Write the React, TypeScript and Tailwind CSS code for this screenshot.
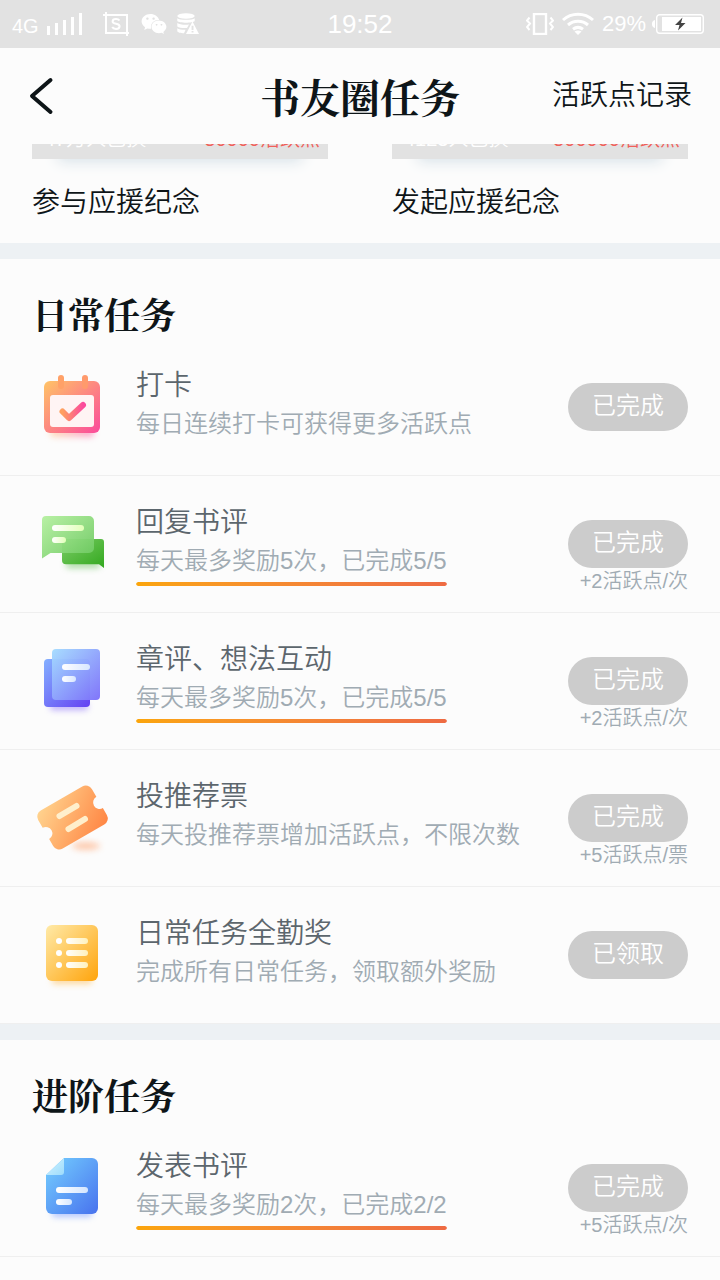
import { useId, type ReactNode } from "react";
import { FaWeixin } from "react-icons/fa";

type IconName = "calendar" | "bubbles" | "pages" | "ticket" | "list" | "doc";

interface Task {
  icon: IconName;
  title: string;
  desc: string;
  action: string;
  reward?: string;
  progress?: number;
}

const dailyTasks: Task[] = [
  { icon: "calendar", title: "打卡", desc: "每日连续打卡可获得更多活跃点", action: "已完成" },
  {
    icon: "bubbles",
    title: "回复书评",
    desc: "每天最多奖励5次，已完成5/5",
    action: "已完成",
    reward: "+2活跃点/次",
    progress: 100,
  },
  {
    icon: "pages",
    title: "章评、想法互动",
    desc: "每天最多奖励5次，已完成5/5",
    action: "已完成",
    reward: "+2活跃点/次",
    progress: 100,
  },
  {
    icon: "ticket",
    title: "投推荐票",
    desc: "每天投推荐票增加活跃点，不限次数",
    action: "已完成",
    reward: "+5活跃点/票",
  },
  { icon: "list", title: "日常任务全勤奖", desc: "完成所有日常任务，领取额外奖励", action: "已领取" },
];

const advancedTasks: Task[] = [
  {
    icon: "doc",
    title: "发表书评",
    desc: "每天最多奖励2次，已完成2/2",
    action: "已完成",
    reward: "+5活跃点/次",
    progress: 100,
  },
];

const keepsakes = [
  { name: "参与应援纪念", claimed: "47万人已换", cost: "50000活跃点" },
  { name: "发起应援纪念", claimed: "4123人已换", cost: "500000活跃点" },
];

const palette: Record<IconName, { from: string; to: string; backFrom: string; backTo: string; line: string }> = {
  calendar: { from: "#ffc466", to: "#fb4a9c", backFrom: "#ffc466", backTo: "#ff8a72", line: "#ffffff" },
  bubbles: { from: "#b5f0a0", to: "#6cc860", backFrom: "#7ccc66", backTo: "#32a81e", line: "#e2ffb8" },
  pages: { from: "#a4dcff", to: "#7c70fa", backFrom: "#84b0ff", backTo: "#6440f2", line: "#d8e6ff" },
  ticket: { from: "#ffd590", to: "#ff8442", backFrom: "#ffd590", backTo: "#ff8442", line: "#ffefcc" },
  list: { from: "#ffeaa8", to: "#ffa40c", backFrom: "#ffeaa8", backTo: "#ffa40c", line: "#fff1bc" },
  doc: { from: "#74d0ff", to: "#4872ee", backFrom: "#d4f4ff", backTo: "#9ddcfc", line: "#d4e6ff" },
};

function TaskIcon({ name }: { name: IconName }) {
  const id = useId();
  const c = palette[name];
  const main = `url(#${id}m)`;
  const back = `url(#${id}b)`;
  const blur = `url(#${id}f)`;
  const line = `url(#${id}l)`;

  const shapes: Record<IconName, ReactNode> = {
    calendar: (
      <>
        <rect x="18" y="60" width="44" height="9" rx="4" fill="url(#calShadow)" opacity=".5" filter={blur} />
        <rect x="12" y="13" width="56" height="52" rx="6" fill={main} />
        <rect x="18" y="27" width="44" height="32" rx="3" fill="#fff4f4" />
        <rect x="26" y="7" width="6" height="14" rx="3" fill="#ffa168" />
        <rect x="50" y="7" width="6" height="14" rx="3" fill="#ff9a6c" />
        <path d="M30.500 43.500l6.500 6.500L51 37" fill="none" stroke="url(#calCheck)" strokeWidth="6" strokeLinecap="round" strokeLinejoin="round" />
        <defs>
          <linearGradient id="calShadow">
            <stop stopColor="#ffc07a" />
            <stop offset="1" stopColor="#fb4a9c" />
          </linearGradient>
          <linearGradient id="calCheck">
            <stop stopColor="#ffa060" />
            <stop offset="1" stopColor="#fb4a9c" />
          </linearGradient>
        </defs>
      </>
    ),
    bubbles: (
      <>
        <rect x="34" y="56" width="34" height="7" rx="3" fill="#58b848" opacity=".5" filter={blur} />
        <path d="M34 34h35a3 3 0 0 1 3 3v26l-5-3.700H34a4 4 0 0 1-4-4V38a4 4 0 0 1 4-4z" fill={back} />
        <path d="M14 11h43a5 5 0 0 1 5 5v27a5 5 0 0 1-5 5H18.500L10 53.500V15a4 4 0 0 1 4-4z" fill={main} fillOpacity=".95" />
        <rect x="20" y="20" width="32" height="6" rx="3" fill={line} />
        <rect x="20" y="32" width="14" height="6" rx="3" fill={line} />
      </>
    ),
    pages: (
      <>
        <rect x="18" y="61" width="38" height="7" rx="3" fill="#7a5cf8" opacity=".5" filter={blur} />
        <rect x="12" y="17" width="46" height="48" rx="4" fill={back} />
        <rect x="20" y="7" width="48" height="51" rx="4" fill={main} fillOpacity=".96" />
        <rect x="30" y="22" width="28" height="6" rx="3" fill={line} />
        <rect x="30" y="34" width="14" height="6" rx="3" fill={line} />
      </>
    ),
    ticket: (
      <>
        <ellipse cx="54" cy="67" rx="14" ry="4" fill="#ff9a60" opacity=".5" filter={blur} />
        <path
          transform="translate(40.5 38.5) rotate(-30)"
          d="M-24-22h48a7 7 0 0 1 7 7v9a6.500 6.500 0 0 0 0 13v8a7 7 0 0 1-7 7h-48a7 7 0 0 1-7-7V7a6.500 6.500 0 0 0 0-13v-9a7 7 0 0 1 7-7z"
          fill={main}
        />
        <path d="M27.500 37l17-10M36.500 50l16.500-10" stroke={c.line} strokeWidth="6" strokeLinecap="round" />
      </>
    ),
    list: (
      <>
        <rect x="20" y="60" width="40" height="8" rx="3" fill="#ffb43a" opacity=".5" filter={blur} />
        <rect x="14" y="9" width="52" height="56" rx="6" fill={main} />
        {[25, 37, 49].map((y) => (
          <g key={y}>
            <circle cx="27" cy={y} r="3" fill="#ffffff" />
            <rect x="34" y={y - 3} width="22" height="6" rx="3" fill={line} />
          </g>
        ))}
      </>
    ),
    doc: (
      <>
        <rect x="20" y="60" width="40" height="8" rx="3" fill="#6c90ff" opacity=".5" filter={blur} />
        <path d="M32 9h28a6 6 0 0 1 6 6v44a6 6 0 0 1-6 6H20a6 6 0 0 1-6-6V26z" fill={main} />
        <path d="M32 9v14a3 3 0 0 1-3 3H14z" fill={back} />
        <rect x="24" y="38" width="32" height="6" rx="3" fill={line} />
        <rect x="24" y="50" width="16" height="6" rx="3" fill={line} />
      </>
    ),
  };

  return (
    <svg viewBox="0 0 80 80" className="w-20 h-20 shrink-0" aria-hidden="true">
      <defs>
        <linearGradient id={`${id}m`} x1="0" y1="0" x2="1" y2="1">
          <stop stopColor={c.from} />
          <stop offset="1" stopColor={c.to} />
        </linearGradient>
        <linearGradient id={`${id}b`} x1="0" y1="0" x2="1" y2="1">
          <stop stopColor={c.backFrom} />
          <stop offset="1" stopColor={c.backTo} />
        </linearGradient>
        <linearGradient id={`${id}l`}>
          <stop stopColor="#ffffff" />
          <stop offset="1" stopColor={c.line} />
        </linearGradient>
        <filter id={`${id}f`} x="-30%" y="-150%" width="160%" height="400%">
          <feGaussianBlur stdDeviation="3" />
        </filter>
      </defs>
      {shapes[name]}
    </svg>
  );
}

function StatusBar() {
  return (
    <div className="grid grid-cols-3 items-center h-12 px-3 bg-[#e2e2e2] text-white font-normal font-['Liberation_Sans',sans-serif]">
      <div className="flex items-center">
        <span className="text-xl leading-6 pt-1">4G</span>
        <svg width="36" height="22" viewBox="0 0 36 22" className="ml-2" fill="currentColor" aria-hidden="true">
          <path d="M0 13h3v9H0zM8 10h3v12H8zM16 7h3v15h-3zM24 4h3v18h-3zM32 0h3v22h-3z" />
        </svg>
        <svg width="26" height="24" viewBox="0 0 26 24" className="ml-5" fill="none" stroke="currentColor" strokeWidth="2" aria-hidden="true">
          <path d="M0 3h24v21M3 0v21h23" />
          <path d="M16.500 8.500c-.7-1-2-1.500-3.500-1.500-2 0-3.400.9-3.400 2.400 0 3.400 7 1.500 7 4.900 0 1.600-1.500 2.600-3.600 2.600-1.700 0-3.100-.7-3.800-1.900" />
        </svg>
        <FaWeixin className="ml-3 w-[26px] h-[26px] shrink-0" />
        <svg width="22" height="22" viewBox="0 0 22 22" className="ml-2.5 shrink-0" fill="currentColor" aria-hidden="true">
          <ellipse cx="9" cy="3" rx="8.700" ry="2.800" />
          <path d="M.3 5.300c2 2 15.400 2 17.400 0v2.800c-2 2.200-15.400 2.200-17.400 0zM.3 10c2 1.700 8 2.100 11.700 1.500l-2 3.500c-4 .2-8.200-.2-9.700-1.600zM.3 15.200c1.500 1.200 5 1.600 8.300 1.500l-1.600 3.600c-3.200-.1-6.700-.9-6.700-2.300z" />
          <path fillRule="evenodd" d="M15.500 8.500L22 21H9zM14.600 12.800v4.200h1.900v-4.200zM14.600 18v1.600h1.900V18z" />
        </svg>
      </div>
      <span className="text-center text-[26px] leading-8">19:52</span>
      <div className="flex items-center justify-end pr-1">
        <svg width="28" height="22" viewBox="0 0 28 22" fill="none" stroke="currentColor" strokeWidth="2" aria-hidden="true">
          <rect x="8" y="1" width="12" height="20" strokeWidth="2.400" />
          <path d="M3.500 4.500L1 7.500l3 3-3 3.500 2.500 3M24.500 4.500l2.500 3-3 3 3 3.500-2.500 3" />
        </svg>
        <svg width="32" height="24" viewBox="0 0 32 24" className="ml-2" fill="none" stroke="currentColor" strokeWidth="3" aria-hidden="true">
          <path d="M1 8c8.500-7.800 21.500-7.800 30 0M6 13c5.700-5 14.300-5 20 0M11 17.300c3-2.300 7-2.300 10 0" />
          <path d="M12.500 19.500c2-1.400 5-1.400 7 0L16 23z" fill="currentColor" stroke="none" />
        </svg>
        <span className="ml-2 text-[22px] leading-6">29%</span>
        <svg width="52" height="20" viewBox="0 0 52 20" className="ml-1.5" aria-hidden="true">
          <path d="M3 6v8a4 4 0 0 1-3-4 4 4 0 0 1 3-4z" fill="#fff" />
          <rect x="4.700" y=".7" width="46.600" height="18.600" rx="3" fill="none" stroke="#fff" strokeWidth="1.400" />
          <rect x="10" y="3" width="39" height="14" fill="#fff" />
          <path d="M30.500 3.500L23 11h4.500L26 16.500l7.500-7.500H29z" fill="#444" />
        </svg>
      </div>
    </div>
  );
}

function TaskRow({ task }: { task: Task }) {
  return (
    <li className="flex items-start px-8 h-[137px] border-b border-[#efefef]">
      <div className="pt-[29px]">
        <TaskIcon name={task.icon} />
      </div>
      <div className="ml-6 pt-[29px] flex-1 min-w-0 flex flex-col items-start">
        <h3 className="text-[28px] leading-9 text-[#5c666d]">{task.title}</h3>
        <div>
          <p className="text-2xl leading-10 text-[#a0abb3] whitespace-nowrap">{task.desc}</p>
          {task.progress !== undefined && (
            <div className="mt-px h-1 rounded-full overflow-hidden">
              <div
                className="h-full rounded-full bg-linear-to-r from-[#fba50a] to-[#ee6a42]"
                style={{ width: `${task.progress}%` }}
              />
            </div>
          )}
        </div>
      </div>
      <div className="pt-11 shrink-0 flex flex-col items-end">
        <button type="button" className="w-[120px] h-12 pb-0.5 rounded-full bg-[#cccccc] text-white text-2xl leading-8">
          {task.action}
        </button>
        {task.reward && <span className="pt-px text-xl leading-6 text-[#a0abb3]">{task.reward}</span>}
      </div>
    </li>
  );
}

function TaskSection({ title, tasks }: { title: string; tasks: Task[] }) {
  return (
    <section className="border-t-16 border-[#edf1f4]">
      <h2 className="px-8 pt-[31px] pb-px text-4xl leading-[48px] font-bold font-['Noto_Serif_CJK_SC','Noto_Serif_SC','Liberation_Serif',serif]">
        {title}
      </h2>
      <ul>
        {tasks.map((task) => (
          <TaskRow key={task.title} task={task} />
        ))}
      </ul>
    </section>
  );
}

export default function App() {
  return (
    <div className="min-h-screen bg-[#fcfcfc] text-[#0e1518] font-[350] font-['Liberation_Sans','Noto_Sans_CJK_SC',sans-serif]">
      <StatusBar />
      <header className="grid grid-cols-[1fr_auto_1fr] items-center h-24 px-7">
        <button type="button" aria-label="返回" className="justify-self-start">
          <svg width="26" height="38" viewBox="0 0 26 38" fill="none" stroke="currentColor" strokeWidth="4" strokeLinecap="round" strokeLinejoin="round">
            <path d="M22.500 3L4 19l18.500 16" />
          </svg>
        </button>
        <h1 className="text-[40px] leading-[56px] font-bold font-['Noto_Serif_CJK_SC','Noto_Serif_SC','Liberation_Serif',serif]">
          书友圈任务
        </h1>
        <a href="#records" className="justify-self-end text-[28px] leading-10">
          活跃点记录
        </a>
      </header>
      <main className="overflow-hidden">
        <div className="grid grid-cols-2 gap-16 px-8">
          {keepsakes.map((k) => (
            <article key={k.name} className="pb-5">
              <div className="-mt-[125px] h-[140px] px-2 pb-1.5 flex items-end justify-between bg-[#e2e2e2] text-xl leading-7 shadow-[0_28px_14px_-26px_#d5e0e7]">
                <span className="pl-1 text-white">{k.claimed}</span>
                <span className="text-[#f0605a]">{k.cost}</span>
              </div>
              <p className="pt-6 text-[28px] leading-10">{k.name}</p>
            </article>
          ))}
        </div>
        <TaskSection title="日常任务" tasks={dailyTasks} />
        <TaskSection title="进阶任务" tasks={advancedTasks} />
      </main>
    </div>
  );
}
